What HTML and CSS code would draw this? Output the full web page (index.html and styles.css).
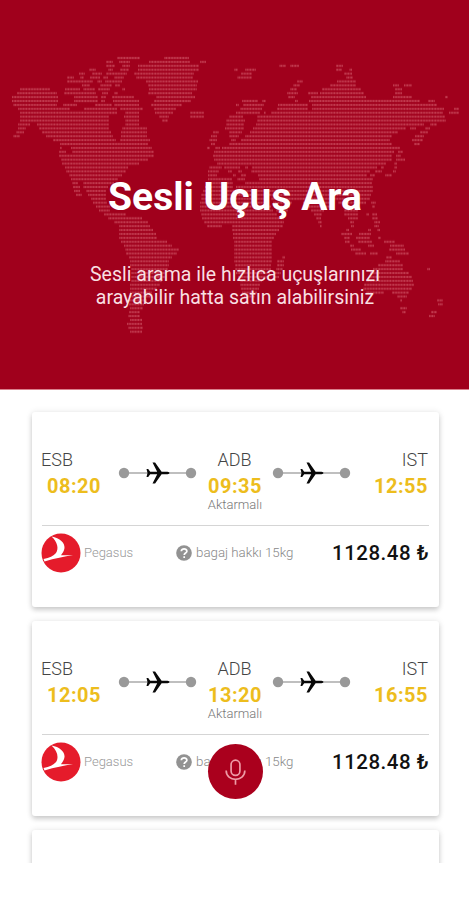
FILE: index.html
```html
<!DOCTYPE html>
<html lang="tr">
<head>
<meta charset="utf-8">
<title>Sesli Uçuş Ara</title>
<link rel="stylesheet" href="styles.css">
</head>
<body>
<svg class="defs" aria-hidden="true">
  <symbol id="route" viewBox="0 0 80 24">
    <path d="M6 12H74" stroke="#aaa" stroke-width="1.3"/>
    <circle cx="6" cy="12" r="5.200" fill="#999"/><circle cx="73" cy="12" r="5.200" fill="#999"/>
    <path d="M28.500 8h1.700l2 2.800h7L34.500 1.500h2.600l6.500 9.300h5.900q2 .2 2 1.200t-2 1.200h-5.900l-6.500 9.300h-2.600l4.700-9.300h-7l-2 2.800h-1.700l1-4z" fill="#080808"/>
  </symbol>
  <symbol id="bird" viewBox="0 0 40 40">
    <circle cx="20" cy="20" r="19.500" fill="#e51b2b"/>
    <path d="M10.500 3.500C19 5 24 10 23.500 15c-.3 3-2 5-3.500 7.200 4 .3 8-.3 12-.2-9 2-18 3-28.500 6.500l-1-2.500c6-1 10-3 12.500-6C18 15.500 16.500 9 10.500 3.500z" fill="#fff"/>
  </symbol>
  <symbol id="help" viewBox="0 0 16 16">
    <circle cx="8" cy="8" r="7.800" fill="#929292"/>
    <path d="M5.300 6.300C5.300 2.900 10.900 3 10.900 6.200 10.900 8 8.200 8 8.200 9.900M8.200 11.300v1.700" fill="none" stroke="#fff" stroke-width="1.700"/>
  </symbol>
</svg>
<header class="hero">
  <svg class="map" viewBox="0 0 469 389" aria-hidden="true">
    <defs><pattern id="dots" patternUnits="userSpaceOnUse" x="0" y="-.5" width="2.800" height="1"><rect x=".3" y=".22" width="2" height=".56" fill="#c23c50"/></pattern></defs>
    <g class="land" transform="translate(0 58) scale(1 3.910)">
      <path d="M117 0H140M164 0H189M106 1H113M119 1H130M149 1H190M200 1H206M106 2H115M122 2H130M138 2H199M279 2H286M290 2H299M336 2H343M89 3H96M108 3H113M120 3H129M138 3H199M234 3H238M245 3H256M336 3H342M349 3H352M79 4H85M92 4H102M106 4H127M134 4H194M241 4H252M344 4H352M67 5H74M80 5H84M90 5H100M103 5H108M114 5H124M136 5H193M237 5H252M346 5H353M67 6H93M97 6H102M105 6H122M146 6H198M297 6H303M337 6H356M82 7H90M100 7H112M115 7H120M148 7H197M293 7H300M330 7H356M393 7H399M404 7H412M20 8H50M65 8H80M83 8H95M98 8H110M122 8H125M149 8H197M290 8H297M322 8H361M395 8H402M17 9H57M64 9H96M102 9H108M114 9H118M148 9H192M287 9H298M308 9H318M320 9H364M395 9H402"/>
      <path d="M12 10H58M74 10H98M101 10H106M112 10H134M156 10H195M288 10H295M311 10H366M393 10H412M445 10H448M12 11H58M74 11H98M101 11H105M113 11H139M154 11H191M242 11H258M262 11H266M295 11H298M309 11H420M428 11H435M13 12H57M63 12H77M95 12H112M114 12H139M151 12H182M236 12H239M243 12H264M278 12H308M312 12H437M18 13H70M84 13H117M120 13H143M154 13H176M240 13H262M277 13H308M312 13H444M454 13H459M20 14H117M125 14H139M155 14H173M190 14H204M236 14H260M264 14H266M271 14H443M449 14H459M20 15H109M124 15H139M159 15H169M190 15H204M229 15H243M257 15H445M20 16H109M125 16H139M162 16H168M226 16H245M257 16H446M18 17H30M37 17H109M125 17H139M226 17H244M256 17H424M430 17H437M18 18H26M39 18H109M122 18H147M225 18H244M253 18H406M410 18H416M425 18H430M16 19H24M42 19H111M121 19H147M213 19H219M229 19H242M250 19H398M420 19H428M13 20H20M46 20H113M121 20H147M211 20H217M229 20H239M245 20H392M415 20H424M53 21H116M120 21H150M209 21H217M231 21H236M241 21H390M412 21H423M60 22H148M211 22H215M229 22H392M414 22H420M60 23H62M71 23H152M207 23H210M215 23H220M222 23H400M59 24H66M72 24H154M214 24H394M398 24H403M59 25H154M213 25H392M396 25H401M61 26H148M214 26H392M396 26H405M62 27H139M217 27H386M394 27H397"/>
      <path d="M65 28H128M209 28H222M224 28H240M245 28H248M252 28H377M381 28H384M394 28H397M66 29H126M208 29H219M228 29H232M238 29H242M251 29H370M375 29H382M393 29H396M69 30H122M208 30H217M233 30H236M241 30H246M258 30H367M370 30H375M385 30H392M71 31H118M208 31H232M237 31H245M259 31H373M72 32H78M83 32H114M207 32H233M245 32H372M73 33H80M83 33H108M205 33H233M236 33H373M74 34H80M86 34H106M203 34H267M269 34H373M76 35H82M88 35H106M201 35H371M91 36H106M201 36H268M271 36H345M348 36H370M93 37H107M200 37H269M273 37H292M303 37H333M338 37H366M371 37H376M96 38H107M107 38H110M200 38H271M274 38H290M308 38H330M343 38H358M372 38H375M99 39H110M200 39H273M276 39H288M311 39H324M344 39H358M104 40H126M201 40H277M314 40H322M344 40H358M366 40H369M372 40H377M108 41H142M202 41H284M316 41H321M348 41H358M372 41H378M114 42H148M204 42H284M318 42H322M350 42H354M374 42H380M119 43H150M207 43H222M232 43H283M320 43H322M351 43H354M374 43H379M119 44H153M232 44H279M346 44H349M368 44H371M377 44H380M119 45H156M233 45H276M341 45H352M359 45H371M119 46H157M233 46H274M344 46H350M356 46H370M378 46H381M121 47H167M234 47H272M345 47H350M358 47H372M384 47H395M124 48H172M234 48H272M350 48H354M368 48H374M390 48H404M125 49H179M234 49H272M351 49H361M389 49H405M126 50H177M234 50H272M355 50H366M370 50H378M396 50H409M129 51H172M234 51H272M386 51H392M282 51H285M130 52H169M234 52H272M277 52H284M385 52H400M130 53H169M235 53H271M277 53H284M378 53H403M131 54H168M235 54H271M276 54H283M373 54H403M427 54H430M131 55H166M236 55H270M275 55H281M370 55H409M131 56H165M238 56H268M275 56H279M369 56H412"/>
      <path d="M131 57H162M240 57H262M366 57H413M130 58H160M240 58H260M364 58H414M130 59H157M241 59H259M363 59H412M130 60H152M242 60H257M366 60H384M392 60H409M129 61H150M244 61H255M397 61H407M129 62H147M400 62H402M437 62H443M129 63H144M438 63H443M130 64H143M400 64H407M129 65H140M402 65H406M431 65H437M128 66H140M429 66H435M130 67H142M127 68H142M128 69H143M130 70H142"/>
    </g>
  </svg>
  <div class="hero-text">
    <h1>Sesli Uçuş Ara</h1>
    <p>Sesli arama ile hızlıca uçuşlarınızı<br>arayabilir hatta satın alabilirsiniz</p>
  </div>
</header>
<main class="results">
  <article class="card">
    <div class="trip">
      <div class="stop"><span class="code">ESB</span><b class="time">08:20</b></div>
      <svg class="route"><use href="#route"/></svg>
      <div class="stop mid"><span class="code">ADB</span><b class="time">09:35</b><small>Aktarmalı</small></div>
      <svg class="route"><use href="#route"/></svg>
      <div class="stop end"><span class="code">IST</span><b class="time">12:55</b></div>
    </div>
    <div class="fare">
      <svg class="logo"><use href="#bird"/></svg><span class="airline">Pegasus</span>
      <svg class="help"><use href="#help"/></svg><span class="bag">bagaj hakkı 15kg</span>
      <strong class="price">1128.48 ₺</strong>
    </div>
  </article>
  <article class="card">
    <div class="trip">
      <div class="stop"><span class="code">ESB</span><b class="time">12:05</b></div>
      <svg class="route"><use href="#route"/></svg>
      <div class="stop mid"><span class="code">ADB</span><b class="time">13:20</b><small>Aktarmalı</small></div>
      <svg class="route"><use href="#route"/></svg>
      <div class="stop end"><span class="code">IST</span><b class="time">16:55</b></div>
    </div>
    <div class="fare">
      <svg class="logo"><use href="#bird"/></svg><span class="airline">Pegasus</span>
      <svg class="help"><use href="#help"/></svg><span class="bag">bagaj hakkı 15kg</span>
      <strong class="price">1128.48 ₺</strong>
    </div>
  </article>
  <article class="card"></article>
  <button class="mic" aria-label="Sesli ara">
    <svg viewBox="0 0 56 56" fill="none" stroke="#ee9ca7" stroke-width="1.700"><rect x="23.500" y="16.500" width="9" height="15.500" rx="4.500"/><path d="M18.500 27c0 12 19 12 19 0M28 36v5.500"/></svg>
  </button>
</main>
</body>
</html>
```
FILE: styles.css
```css
* { box-sizing: border-box; }
body { margin: 0; height: 900px; overflow: hidden; background: #fff; font-family: Roboto, "Liberation Sans", sans-serif; }
.defs { position: absolute; width: 0; height: 0; }
.hero { position: relative; height: 390px; background: #a0001c; border-bottom: 1px solid #d9808c; color: #fff; text-align: center; }
.map { position: absolute; inset: 0; width: 469px; height: 389px; }
.land path { fill: none; stroke: url(#dots); stroke-width: 1; }
.hero-text { position: relative; padding: 174px 0 0 1px; }
h1 { margin: 0; font-size: 39px; line-height: 46px; font-weight: 700; }
.hero-text p { margin: 43px 0 0; font-size: 19.5px; line-height: 23px; color: #f9dfe2; }
.results { position: relative; height: 473px; padding: 22px 30px 0 32px; overflow: hidden; display: flex; flex-direction: column; gap: 14px; }
.card { flex: 0 0 195px; padding: 0 10px; border-radius: 3px; background: #fff; box-shadow: 0 3px 5px rgba(0,0,0,.17), 0 0 7px rgba(0,0,0,.09); }
.trip { height: 114px; padding-top: 35px; display: flex; border-bottom: 1px solid #d5d5d5; }
.stop { display: flex; flex-direction: column; width: 76px; flex: none; }
.mid { width: 74px; align-items: center; }
.end { align-items: flex-end; }
.code { margin-left: -1px; font-size: 18px; line-height: 26px; font-weight: 300; color: #444; }
.time { font-size: 20px; line-height: 26px; letter-spacing: .5px; color: #edbd1d; }
.stop:first-child .time { padding-left: 5px; }
.mid small { font-size: 13px; line-height: 12px; font-weight: 300; color: #777; }
.route { width: 80px; height: 24px; margin-top: 14px; flex: none; }
.fare { display: flex; align-items: center; height: 53px; }
.logo { width: 40px; height: 40px; margin-left: -1px; }
.airline { width: 92px; margin-left: 3px; font-size: 13px; color: #999; font-weight: 300; }
.help { width: 16px; height: 16px; }
.bag { margin-left: 4px; font-size: 13.3px; font-weight: 300; color: #888; white-space: nowrap; }
.price { margin-left: auto; font-size: 20.5px; letter-spacing: .5px; font-weight: 500; color: #111; white-space: nowrap; }
.mic { position: absolute; left: 208px; top: 354px; width: 55px; height: 55px; padding: 0; border: 0; border-radius: 50%; background: #aa001d; }
.mic svg { display: block; width: 55px; height: 55px; }
```
